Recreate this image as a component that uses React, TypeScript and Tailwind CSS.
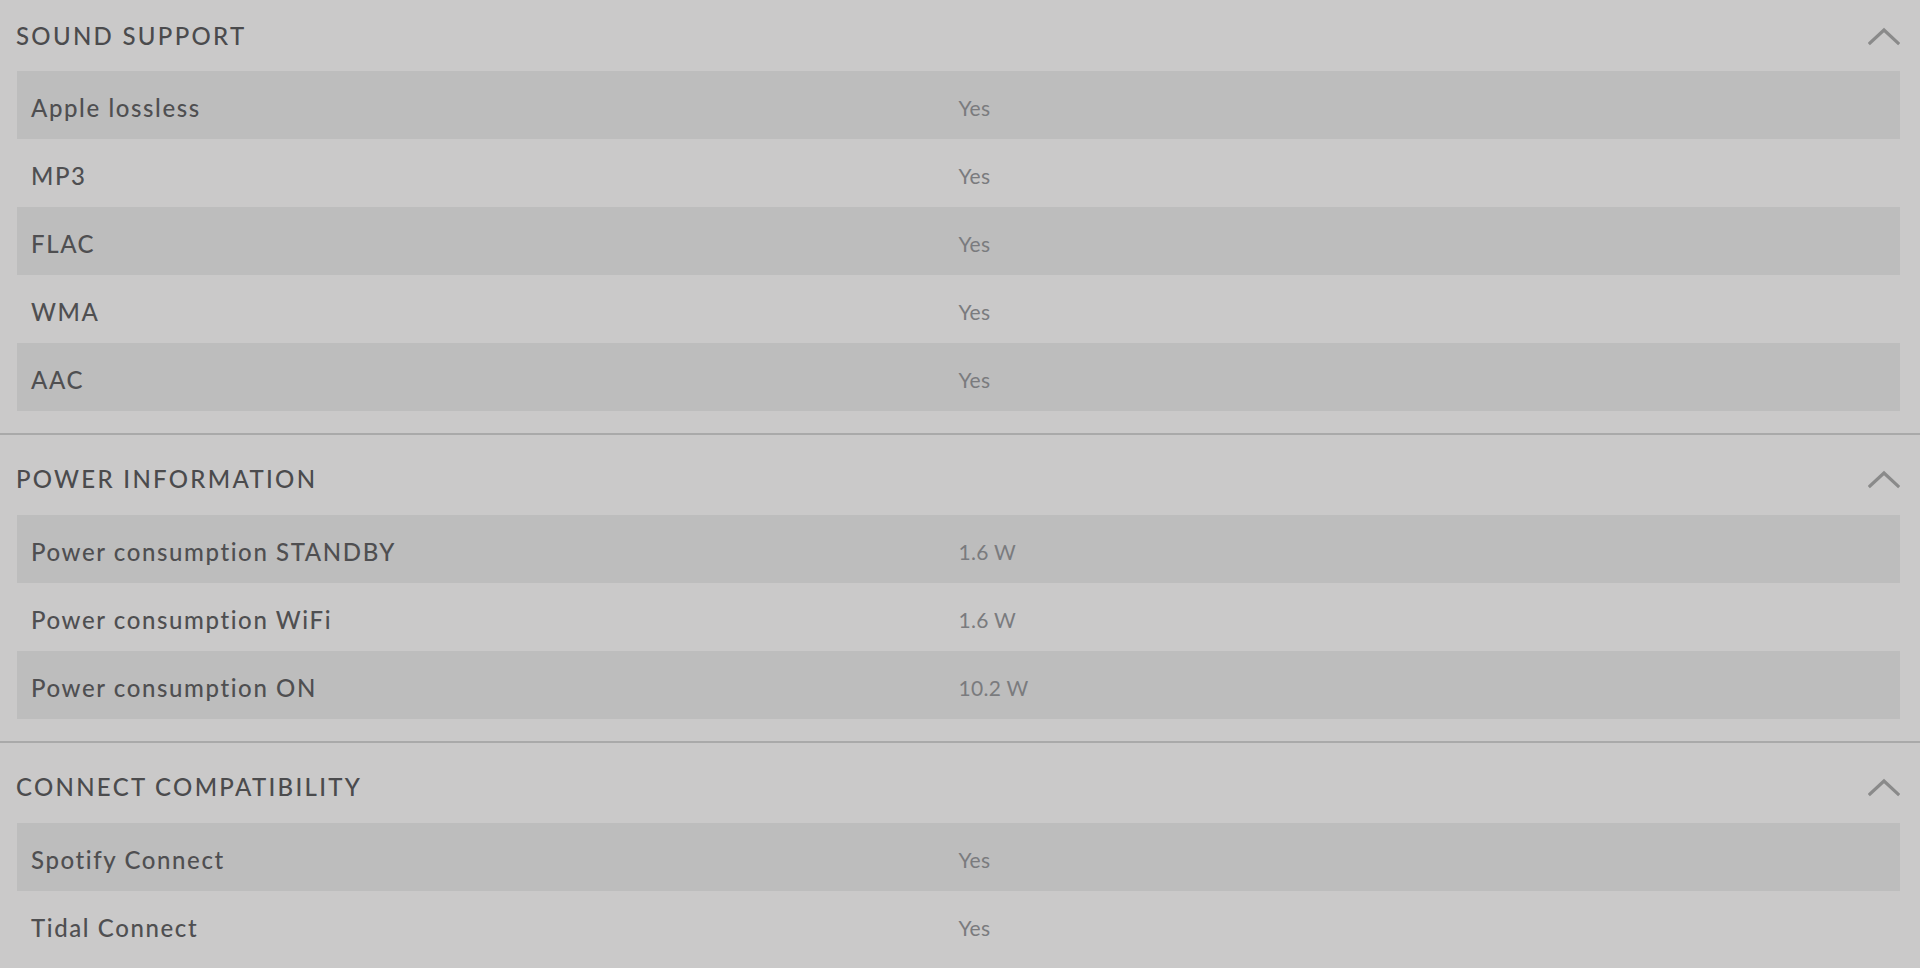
import React from "react";

type Row = { label: string; value: string };
type Section = { title: string; rows: Row[] };

const sections: Section[] = [
  {
    title: "Sound Support",
    rows: [
      { label: "Apple lossless", value: "Yes" },
      { label: "MP3", value: "Yes" },
      { label: "FLAC", value: "Yes" },
      { label: "WMA", value: "Yes" },
      { label: "AAC", value: "Yes" },
    ],
  },
  {
    title: "Power Information",
    rows: [
      { label: "Power consumption STANDBY", value: "1.6 W" },
      { label: "Power consumption WiFi", value: "1.6 W" },
      { label: "Power consumption ON", value: "10.2 W" },
    ],
  },
  {
    title: "Connect Compatibility",
    rows: [
      { label: "Spotify Connect", value: "Yes" },
      { label: "Tidal Connect", value: "Yes" },
    ],
  },
];

function Chevron() {
  return (
    <svg width="32" height="20" viewBox="0 0 32 20" fill="none" className="shrink-0">
      <polyline
        points="2,17 16,4 30,17"
        stroke="#8a8a8a"
        strokeWidth="3.2"
        strokeLinecap="square"
        strokeLinejoin="miter"
      />
    </svg>
  );
}

export default function App() {
  return (
    <div
      className="w-[1920px] h-[968px] overflow-hidden bg-[#cac9c9]"
      style={{ fontFamily: "Lato, 'Open Sans', sans-serif" }}
    >
      {sections.map((s, i) => (
        <section
          key={s.title}
          className={i === 0 ? "" : "border-t-2 border-[#a9a9a9]"}
        >
          <div
            className={
              "flex items-center justify-between pl-[16px] pr-[20px] " +
              (i === 0 ? "pt-[22px] pb-[21px]" : "pt-[30px] pb-[22px]")
            }
          >
            <h2 className="h-[28px] leading-[28px] text-[24px] font-medium uppercase tracking-[2.3px] text-[#4b4b4d]">
              {s.title}
            </h2>
            <Chevron />
          </div>
          <div className="ml-[17px] mr-[20px] pb-[22px]">
            {s.rows.map((r, j) => (
              <div
                key={r.label}
                className={
                  "grid grid-cols-2 items-center h-[68px] px-[14px] pt-[6px] " +
                  (j % 2 === 0 ? "bg-[#bdbdbd]" : "")
                }
              >
                <div className="text-[24px] font-medium text-[#4f4f51] tracking-[1.6px]">
                  {r.label}
                </div>
                <div className="text-[21px] font-normal text-[#7a7b7e] tracking-[0.3px]">
                  {r.value}
                </div>
              </div>
            ))}
          </div>
        </section>
      ))}
    </div>
  );
}
